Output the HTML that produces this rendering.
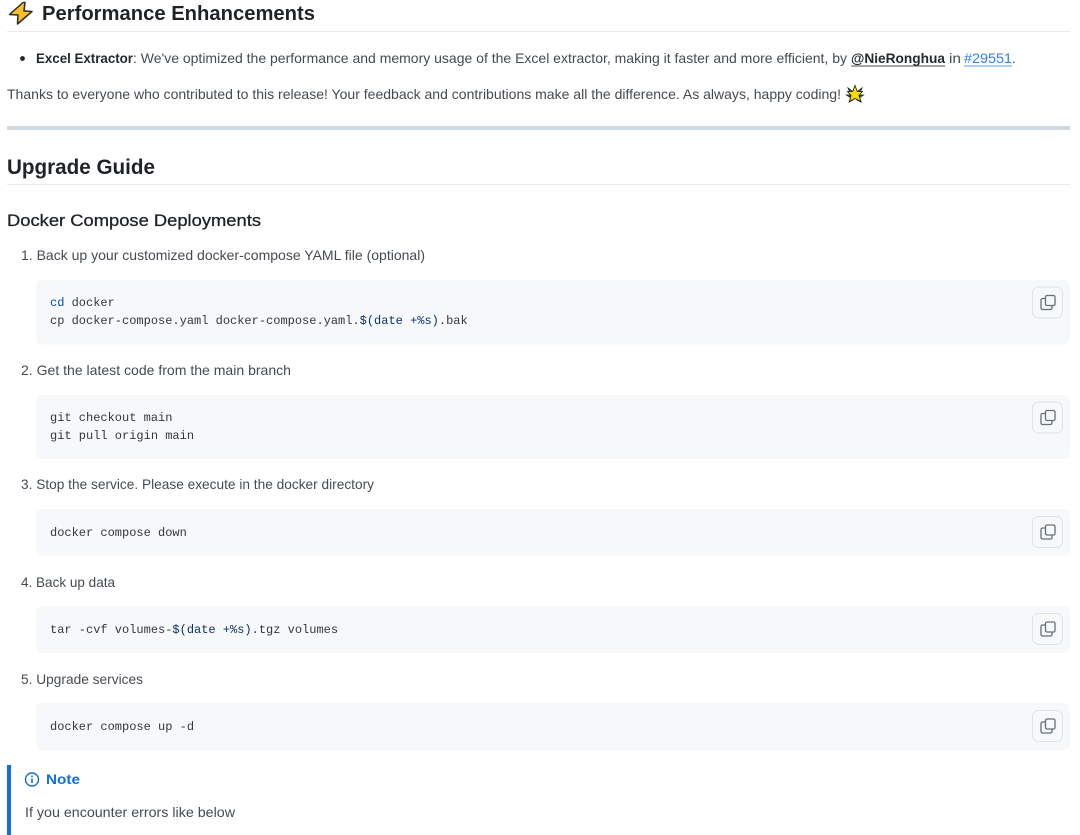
<!DOCTYPE html>
<html lang="en"><head><meta charset="utf-8"><title>Release notes</title>
<style>
html,body{margin:0;padding:0;background:#fff;width:1080px;height:835px;overflow:hidden}
svg{display:block}
text{font-family:"Liberation Sans",sans-serif;fill:#454b52;font-size:14px;white-space:pre}
.h{fill:#1f2328;font-weight:bold}
.m{font-family:"Liberation Mono",monospace;font-size:12px;fill:#33383e}
.k{fill:#0550ae}.d{fill:#0a3069}
.b{fill:#24292f;font-weight:bold}
.btn{fill:#f6f8fa;stroke:#dfe3e8;stroke-width:1}
.ic{fill:none;stroke:#66707a;stroke-width:1.3}
</style></head><body>
<svg width="1080" height="835" viewBox="0 0 1080 835" xmlns="http://www.w3.org/2000/svg">
<defs>
<g id="copy">
<rect class="btn" x="0.5" y="0.5" width="30" height="31" rx="6"/>
<path class="ic" d="M13 12H10.500A1.500 1.500 0 0 0 9 13.500V21.500A1.500 1.500 0 0 0 10.500 23H18.500A1.500 1.500 0 0 0 20 21.500V19"/>
<rect class="ic" x="13.500" y="9" width="9.500" height="10" rx="1.500"/>
</g>
</defs>
<!-- bolt -->
<path d="M23 2.500 9.500 14.500 18 15 17.500 24 32 11.500 24 11 25 2.500Z" fill="#fbbf2d" stroke="#2b2b2b" stroke-width="1.500" stroke-linejoin="round"/>
<text class="h" x="42" y="20" style="font-size:20px" textLength="273" lengthAdjust="spacingAndGlyphs">Performance Enhancements</text>
<rect x="7" y="31" width="1063" height="1" fill="#e8ebef"/>

<circle cx="22.500" cy="58.500" r="2.400" fill="#1f2328"/>
<text class="b" x="36" y="63" textLength="97" lengthAdjust="spacingAndGlyphs">Excel Extractor</text>
<text x="133" y="63" textLength="714" lengthAdjust="spacingAndGlyphs">: We've optimized the performance and memory usage of the Excel extractor, making it faster and more efficient, by</text>
<text class="b" x="851" y="63" textLength="94" lengthAdjust="spacingAndGlyphs">@NieRonghua</text>
<rect x="851" y="65.500" width="94" height="1" fill="#4a4f55"/>
<text x="949" y="63" textLength="12" lengthAdjust="spacingAndGlyphs">in</text>
<text x="964" y="63" textLength="48" lengthAdjust="spacingAndGlyphs" style="fill:#2f7fe6">#29551</text>
<rect x="964" y="65.500" width="48" height="1" fill="#5a9cf0"/>
<text x="1012" y="63">.</text>

<text x="7" y="99" textLength="834" lengthAdjust="spacingAndGlyphs">Thanks to everyone who contributed to this release! Your feedback and contributions make all the difference. As always, happy coding!</text>
<!-- star -->
<path d="M848 88 852 91 851 95 846.500 95 851 98 849 102 853 100ZM862 88 858 91 859 95 863.500 95 859 98 861 102 857 100Z" fill="#1c6a8c" stroke="#10242e" stroke-width=".8"/>
<path d="M855 85.500 857.300 91.500 862.500 91.500 859 95.500 861 101.500 855 98.500 849.500 101.500 851 95.500 847.500 91.500 852.700 91.500Z" fill="#f6d90f" stroke="#1c1a00" stroke-width=".8"/>

<rect x="7" y="126" width="1063" height="4" fill="#d1d9e0"/>

<text class="h" x="7" y="174" style="font-size:21px" textLength="148" lengthAdjust="spacingAndGlyphs">Upgrade Guide</text>
<rect x="7" y="184" width="1063" height="1" fill="#e8ebef"/>
<text class="h" x="7" y="226" style="font-size:16.500px;font-weight:normal;stroke:#1f2328;stroke-width:.3" textLength="254" lengthAdjust="spacingAndGlyphs">Docker Compose Deployments</text>

<text x="21" y="260" textLength="404" lengthAdjust="spacingAndGlyphs">1. Back up your customized docker-compose YAML file (optional)</text>
<rect x="36" y="280" width="1034" height="64.500" rx="6" fill="#f6f8fa"/>
<text class="m" x="50" y="306"><tspan class="k">cd</tspan> docker</text>
<text class="m" x="50" y="324">cp docker-compose.yaml docker-compose.yaml.<tspan class="d">$(date +%s)</tspan>.bak</text>
<use href="#copy" x="1032" y="286.500"/>

<text x="21" y="375" textLength="270" lengthAdjust="spacingAndGlyphs">2. Get the latest code from the main branch</text>
<rect x="36" y="395" width="1034" height="64" rx="6" fill="#f6f8fa"/>
<text class="m" x="50" y="421">git checkout main</text>
<text class="m" x="50" y="439">git pull origin main</text>
<use href="#copy" x="1032" y="401.500"/>

<text x="21" y="489" textLength="353" lengthAdjust="spacingAndGlyphs">3. Stop the service. Please execute in the docker directory</text>
<rect x="36" y="509" width="1034" height="47" rx="6" fill="#f6f8fa"/>
<text class="m" x="50" y="536">docker compose down</text>
<use href="#copy" x="1032" y="516"/>

<text x="21" y="587" textLength="94" lengthAdjust="spacingAndGlyphs">4. Back up data</text>
<rect x="36" y="606" width="1034" height="47" rx="6" fill="#f6f8fa"/>
<text class="m" x="50" y="633">tar -cvf volumes-<tspan class="d">$(date +%s)</tspan>.tgz volumes</text>
<use href="#copy" x="1032" y="613"/>

<text x="21" y="684" textLength="122" lengthAdjust="spacingAndGlyphs">5. Upgrade services</text>
<rect x="36" y="703" width="1034" height="47" rx="6" fill="#f6f8fa"/>
<text class="m" x="50" y="730">docker compose up -d</text>
<use href="#copy" x="1032" y="710"/>

<rect x="7" y="765" width="4" height="70" fill="#0f6fe0"/>
<circle cx="32" cy="779.500" r="6.500" fill="none" stroke="#0f6fe0" stroke-width="1.400"/>
<rect x="31.200" y="778.500" width="1.600" height="4.500" fill="#0f6fe0"/>
<rect x="31.200" y="775.500" width="1.600" height="1.700" fill="#0f6fe0"/>
<text x="46" y="784" style="fill:#0f6fe0;font-weight:bold" textLength="34" lengthAdjust="spacingAndGlyphs">Note</text>
<text x="25" y="817" textLength="210" lengthAdjust="spacingAndGlyphs">If you encounter errors like below</text>
</svg>
</body></html>
